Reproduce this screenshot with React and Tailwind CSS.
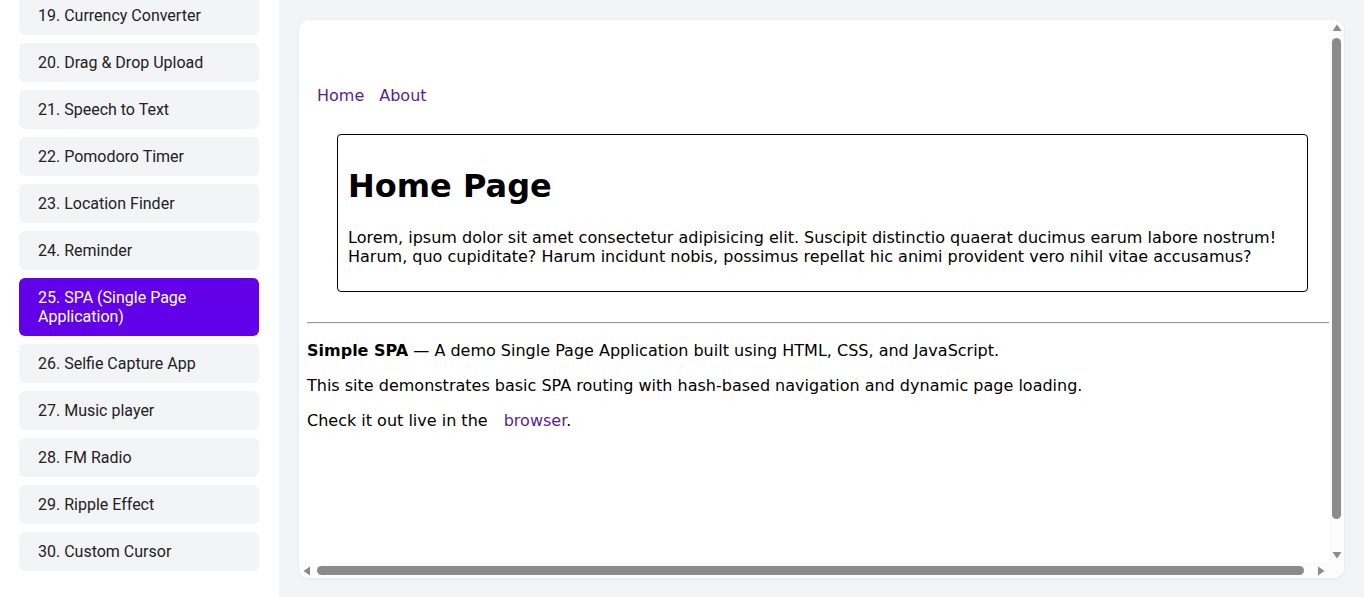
import React from "react";

const items = [
  "19. Currency Converter",
  "20. Drag & Drop Upload",
  "21. Speech to Text",
  "22. Pomodoro Timer",
  "23. Location Finder",
  "24. Reminder",
  "25. SPA (Single Page Application)",
  "26. Selfie Capture App",
  "27. Music player",
  "28. FM Radio",
  "29. Ripple Effect",
  "30. Custom Cursor",
];

export default function App() {
  return (
    <div className="flex h-[597px] w-[1364px] overflow-hidden bg-[#f3f4f6]">
      <aside className="h-full w-[279px] shrink-0 overflow-hidden bg-white pl-[19px] pr-[20px] font-['Roboto',sans-serif] text-[16px]">
        <div className="-mt-[4px] flex flex-col gap-2">
          {items.map((t) => {
            const active = t.startsWith("25.");
            return (
              <div
                key={t}
                className={
                  active
                    ? "w-[240px] rounded-md bg-[#6200ea] px-[19px] py-[10px] leading-[19px] text-white"
                    : "w-[240px] rounded-md bg-[#f3f4f6] px-[19px] py-[10px] leading-[19px] text-[#222]"
                }
              >
                {t}
              </div>
            );
          })}
        </div>
      </aside>
      <main className="min-w-0 flex-1 p-[20px] pb-[19px]">
        <div className="flex h-full flex-col overflow-hidden rounded-[10px] bg-white shadow-[0_1px_4px_rgba(0,0,0,0.06)]">
          <div className="flex min-h-0 flex-1">
            <div className="min-w-0 flex-1 overflow-hidden font-['DejaVu_Sans',sans-serif] text-[16px] leading-[19px] text-black">
              <div className="w-[1040px] px-[8px] pt-[66px]">
                <nav className="flex gap-[15px] pl-[10px]">
                  <span className="text-[#5b1d92]">Home</span>
                  <span className="text-[#5b1d92]">About</span>
                </nav>
                <div className="ml-[30px] mt-[29px] w-[971px] rounded-[4px] border border-black px-[10px] pb-[25px] pt-[8px]">
                  <h1 className="mb-[23px] mt-[25px] text-[32px] font-bold leading-[37px]">Home Page</h1>
                  <p>
                    Lorem, ipsum dolor sit amet consectetur adipisicing elit. Suscipit distinctio quaerat ducimus earum labore nostrum!
                    Harum, quo cupiditate? Harum incidunt nobis, possimus repellat hic animi provident vero nihil vitae accusamus?
                  </p>
                </div>
                <div className="mt-[30px] h-[2px] border-t border-[#9a9a9a] border-b-[#eeeeee] border-b" />
                <p className="mt-[17px]">
                  <b>Simple SPA</b> — A demo Single Page Application built using HTML, CSS, and JavaScript.
                </p>
                <p className="mt-[16px]">
                  This site demonstrates basic SPA routing with hash-based navigation and dynamic page loading.
                </p>
                <p className="mt-[16px]">
                  Check it out live in the <span className="ml-[11px] text-[#5b1d92]">browser</span>.
                </p>
              </div>
            </div>
            <div className="flex w-[15px] shrink-0 flex-col items-center bg-[#fcfcfc]">
              <svg width="10" height="8" viewBox="0 0 10 8" className="mt-[4px]">
                <polygon points="5,0.5 9.5,7 0.5,7" fill="#8b8b8b" />
              </svg>
              <div className="mt-[6px] h-[481px] w-[9px] rounded-full bg-[#8b8b8b]" />
              <div className="flex-1" />
              <svg width="10" height="8" viewBox="0 0 10 8" className="mb-[4px]">
                <polygon points="0.5,1 9.5,1 5,7.5" fill="#8b8b8b" />
              </svg>
            </div>
          </div>
          <div className="flex h-[15px] shrink-0 items-center bg-[#fcfcfc]">
            <svg width="8" height="10" viewBox="0 0 8 10" className="ml-[4px]">
              <polygon points="0.5,5 7,0.5 7,9.5" fill="#8b8b8b" />
            </svg>
            <div className="ml-[6px] h-[9px] w-[987px] rounded-full bg-[#8b8b8b]" />
            <div className="flex-1" />
            <svg width="8" height="10" viewBox="0 0 8 10" className="mr-[19px]">
              <polygon points="1,0.5 7.5,5 1,9.5" fill="#8b8b8b" />
            </svg>
          </div>
        </div>
      </main>
    </div>
  );
}
